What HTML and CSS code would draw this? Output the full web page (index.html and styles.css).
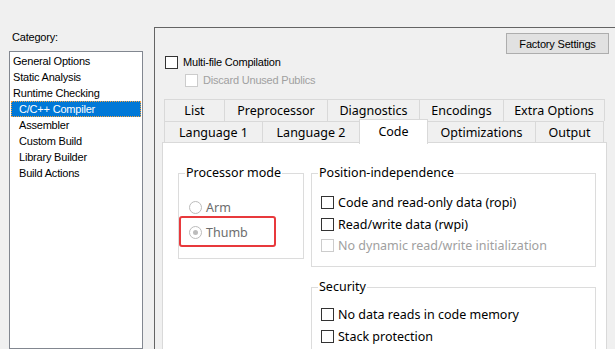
FILE: index.html
```html
<!DOCTYPE html>
<html lang="en">
<head>
  <meta charset="UTF-8" />
  <title>Options</title>
  <link rel="stylesheet" href="styles.css">
</head>
<body>
  <div class="dialog">
    <div class="side">
      <div class="side-label">Category:</div>
      <ul class="listbox">
        <li>General Options</li>
        <li>Static Analysis</li>
        <li>Runtime Checking</li>
        <li class="child selected">C/C++ Compiler</li>
        <li class="child">Assembler</li>
        <li class="child">Custom Build</li>
        <li class="child">Library Builder</li>
        <li class="child">Build Actions</li>
      </ul>
    </div>

    <div class="panel">
      <div class="panel-top">
        <button class="btn">Factory Settings</button>
      </div>
      <label class="check top-check first"><span class="box"></span>Multi-file Compilation</label>
      <label class="check top-check sub disabled"><span class="box"></span>Discard Unused Publics</label>

      <div class="tabs">
        <div class="tab-row back">
          <div class="tab w-list">List</div>
          <div class="tab w-pre">Preprocessor</div>
          <div class="tab w-diag">Diagnostics</div>
          <div class="tab w-enc">Encodings</div>
          <div class="tab w-extra">Extra Options</div>
        </div>
        <div class="tab-row front">
          <div class="tab w-lang1">Language 1</div>
          <div class="tab w-lang2">Language 2</div>
          <div class="tab w-code active">Code</div>
          <div class="tab w-opt">Optimizations</div>
          <div class="tab w-out">Output</div>
        </div>
        <div class="page">
          <fieldset class="group proc">
            <legend>Processor mode</legend>
            <div class="radio disabled"><span class="dot"></span>Arm</div>
            <div class="radio disabled checked"><span class="dot"></span>Thumb</div>
            <div class="mark"></div>
          </fieldset>
          <div class="col">
            <fieldset class="group pos">
              <legend>Position-independence</legend>
              <div class="check"><span class="box"></span>Code and read-only data (ropi)</div>
              <div class="check"><span class="box"></span>Read/write data (rwpi)</div>
              <div class="check disabled"><span class="box"></span>No dynamic read/write initialization</div>
            </fieldset>
            <fieldset class="group sec">
              <legend>Security</legend>
              <div class="check"><span class="box"></span>No data reads in code memory</div>
              <div class="check"><span class="box"></span>Stack protection</div>
            </fieldset>
          </div>
        </div>
      </div>
    </div>
  </div>
</body>
</html>
```

FILE: styles.css
```css
html, body {
  margin: 0;
  padding: 0;
  height: 349px;
  overflow: hidden;
  background: #f0f0f0;
}

body {
  font-family: 'Liberation Sans', Arial, sans-serif;
  font-size: 11px;
  color: #000;
}

.dialog {
  display: flex;
  height: 349px;
}

/* left category list */
.side {
  width: 134px;
  padding-left: 9px;
  display: flex;
  flex-direction: column;
  flex-shrink: 0;
}

.side-label {
  margin-top: 31px;
  height: 20px;
  padding-left: 3px;
  letter-spacing: -0.2px;
}

.listbox {
  flex: 1;
  list-style: none;
  margin: 0;
  padding: 1px 0 0 0;
  background: #fff;
  border: 1px solid #828790;
}

.listbox li {
  height: 16px;
  line-height: 16px;
  padding-left: 2px;
  margin-left: 1px;
  margin-right: 1px;
  letter-spacing: -0.2px;
  white-space: nowrap;
}

.listbox li.child {
  padding-left: 8px;
}

.listbox li.selected {
  background: #0078d7;
  color: #fff;
  outline: 1px dotted #f5a443;
  outline-offset: -1px;
}

/* right options panel */
.panel {
  flex: 1;
  margin-left: 11px;
  margin-top: 27px;
  border-left: 1px solid #646464;
  border-top: 1px solid #646464;
  padding-left: 7px;
}

.panel-top {
  display: flex;
  justify-content: flex-end;
  padding-top: 5px;
  padding-right: 6px;
}

.btn {
  width: 103px;
  height: 21px;
  background: #e1e1e1;
  border: 1px solid #adadad;
  font-family: 'Liberation Sans', Arial, sans-serif;
  font-size: 11px;
  padding: 0;
  color: #000;
  letter-spacing: -0.2px;
}

.check, .radio {
  display: flex;
  align-items: center;
  white-space: nowrap;
}

.box {
  width: 11px;
  height: 11px;
  border: 1px solid #333;
  background: #fff;
  margin-right: 4px;
  flex-shrink: 0;
}

.check.disabled {
  color: #a0a0a0;
}

.check.disabled .box {
  border-color: #cccccc;
}

.top-check {
  height: 18px;
  margin-left: 3px;
  letter-spacing: -0.2px;
}

.top-check.first {
  margin-top: -1px;
}

.top-check.sub {
  margin-left: 23px;
}

.top-check .box {
  margin-right: 5px;
}

/* tab control */
.tabs {
  margin-top: 10px;
  width: 445px;
  font-family: 'Noto Sans', 'Open Sans', sans-serif;
  font-size: 12.5px;
}

.tab-row {
  display: flex;
  margin-left: 2px;
}

.tab {
  height: 21px;
  line-height: 21px;
  text-align: center;
  border: 1px solid #d9d9d9;
  border-right: none;
  border-bottom: none;
  background: #f0f0f0;
  box-sizing: border-box;
}

.tab:last-child {
  border-right: 1px solid #d9d9d9;
}

.back .tab {
  height: 22px;
}

.w-list { width: 60px; }
.w-pre { width: 103px; }
.w-diag { width: 92px; }
.w-enc { width: 84px; }
.w-extra { width: 102px; }
.w-lang1 { width: 98px; }
.w-lang2 { width: 97px; }
.w-code { width: 69px; }
.w-opt { width: 108px; }
.w-out { width: 69px; }

.tab.active {
  background: #fff;
  height: 25px;
  margin-top: -2px;
  margin-bottom: -2px;
  position: relative;
  z-index: 1;
  border-right: 1px solid #d9d9d9;
  margin-right: -1px;
  line-height: 23px;
}

.page {
  background: #fff;
  border: 1px solid #d9d9d9;
  height: 220px;
  display: flex;
  gap: 7px;
  padding: 21px 0 0 15px;
  box-sizing: border-box;
}

.group {
  margin: 0;
  padding: 0 0 0 7px;
  border: 1px solid #dcdcdc;
  min-width: 0;
}

.group legend {
  padding: 0 1px;
  margin-left: -1px;
  line-height: 18px;
}

.proc {
  width: 126px;
  height: 95px;
  box-sizing: border-box;
  position: relative;
}

.proc .radio:first-of-type {
  margin-top: 13px;
}

.radio {
  height: 25px;
  padding-left: 3px;
}

.radio.disabled {
  color: #6d6d6d;
}

.dot {
  width: 11px;
  height: 11px;
  border: 1px solid #bcbcbc;
  border-radius: 50%;
  background: #fff;
  margin-right: 4px;
  position: relative;
}

.radio.checked .dot::after {
  content: "";
  position: absolute;
  left: 3px;
  top: 3px;
  width: 5px;
  height: 5px;
  border-radius: 50%;
  background: #bcbcbc;
}

/* annotation box drawn over the Thumb option */
.mark {
  position: absolute;
  left: 0;
  top: 34px;
  width: 97px;
  height: 31px;
  border: 2px solid #e8393c;
  border-radius: 3px;
  box-sizing: border-box;
}

.col {
  display: flex;
  flex-direction: column;
  gap: 11px;
}

.pos, .sec {
  width: 285px;
  box-sizing: border-box;
}

.pos {
  height: 103px;
  padding-top: 10px;
}

.pos .check, .sec .check {
  height: 21.5px;
  padding-left: 2px;
}

.sec {
  height: 80px;
  padding-top: 8px;
}
```
